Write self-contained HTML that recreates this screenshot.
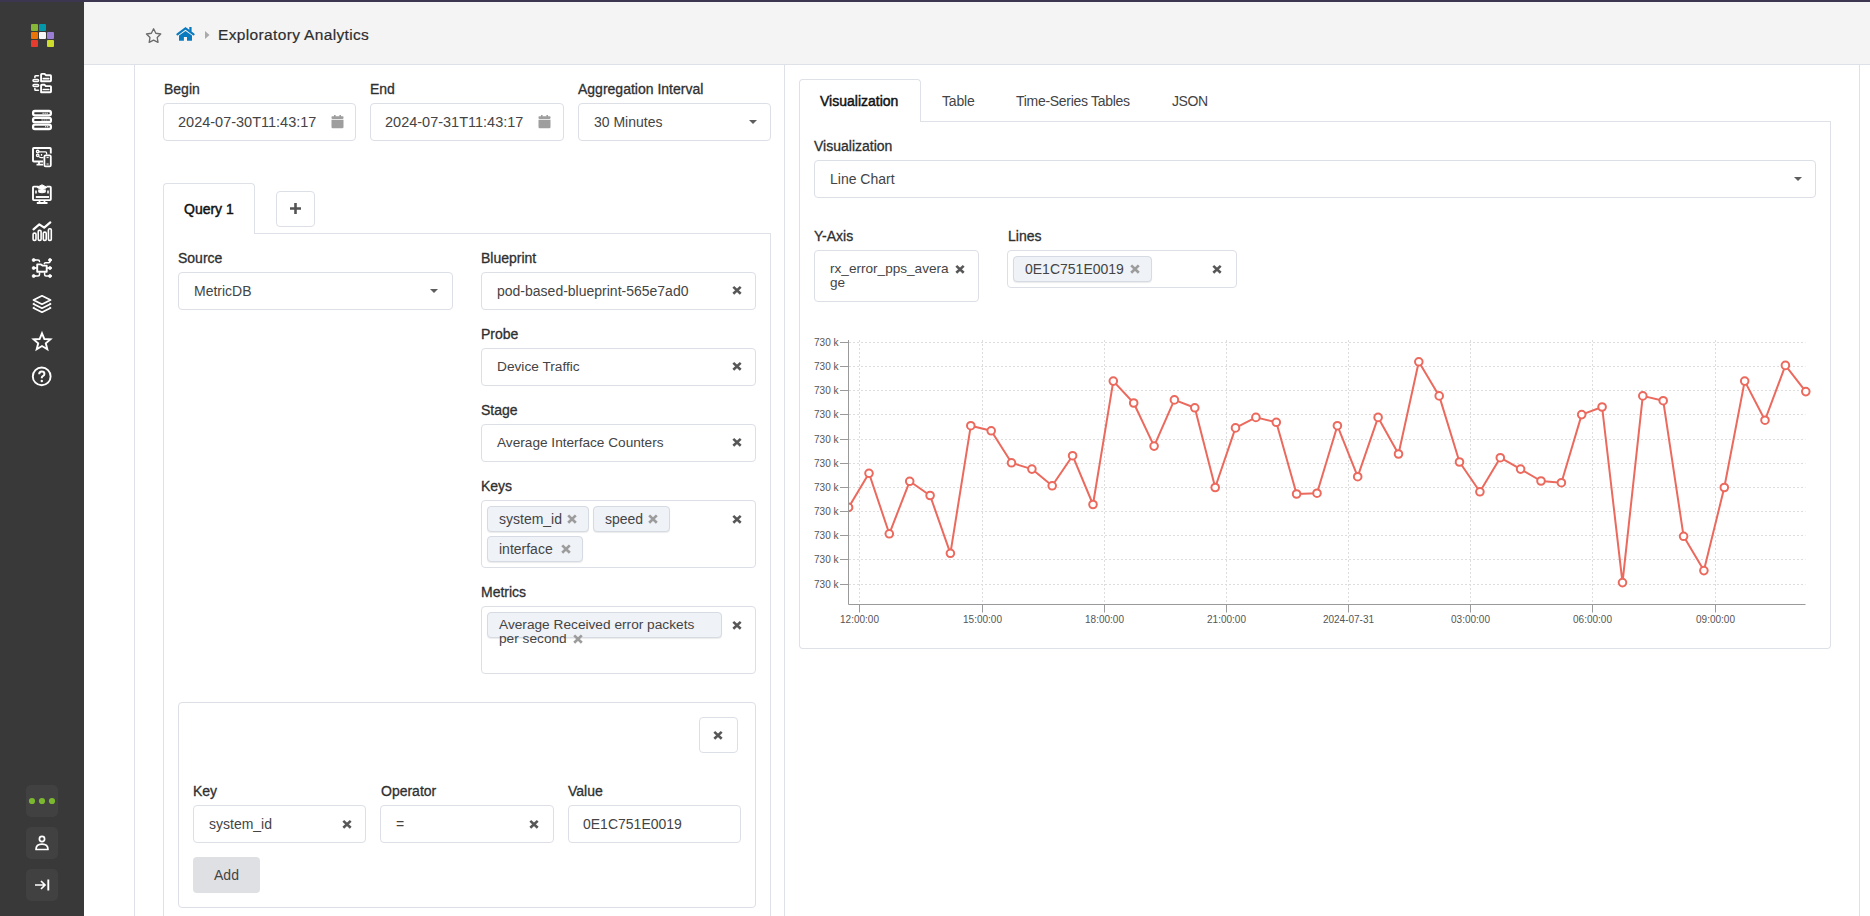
<!DOCTYPE html>
<html><head><meta charset="utf-8">
<style>
*{box-sizing:border-box}
html,body{margin:0;padding:0}
body{width:1870px;height:916px;overflow:hidden;position:relative;background:#fff;font-family:"Liberation Sans",sans-serif;color:#333}
.a{position:absolute}
.lbl{position:absolute;font-size:14px;line-height:16px;color:#2f2f2f;-webkit-text-stroke:0.3px #2f2f2f;white-space:nowrap}
.inp{position:absolute;border:1px solid #dcdfe6;border-radius:4px;background:#fff}
.val{position:absolute;font-size:14px;line-height:16px;color:#444;white-space:nowrap}
.vl{position:absolute;width:1px;background:#dee1e7}
.hl{position:absolute;height:1px;background:#dee1e7}
.caret{position:absolute;width:0;height:0;border-left:4px solid transparent;border-right:4px solid transparent;border-top:4px solid #5e5e5e}
.tag{position:absolute;background:#eff2f7;border:1px solid #d6dae2;border-radius:4px;box-shadow:0 1px 1px rgba(0,0,0,0.08)}
.sbi{position:absolute;left:32px;width:20px;height:20px}
.sbb{position:absolute;left:26px;width:32px;height:32px;border-radius:5px;background:#414141}
</style></head>
<body>
<!-- top bar -->
<div class="a" style="left:0;top:0;width:1870px;height:2px;background:#3d3650"></div>
<!-- sidebar -->
<div class="a" style="left:0;top:2px;width:84px;height:914px;background:#393939"></div>
<!-- header -->
<div class="a" style="left:84px;top:2px;width:1786px;height:62px;background:#f4f4f4"></div>
<div class="hl" style="left:84px;top:64px;width:1786px"></div>
<!-- main vertical lines -->
<div class="vl" style="left:134px;top:65px;height:851px"></div>
<div class="vl" style="left:784px;top:65px;height:851px"></div>
<div class="vl" style="left:1859px;top:65px;height:851px"></div>

<!-- SIDEBAR_ICONS -->
<svg class="a" style="left:31px;top:24px" width="23" height="23" viewBox="0 0 23 23">
<rect x="0" y="0" width="7" height="7" rx="1" fill="#86b737"/><rect x="8" y="0" width="7" height="7" rx="1" fill="#0397aa"/>
<rect x="0" y="8" width="7" height="7" rx="1" fill="#ea7409"/><rect x="8" y="8" width="7" height="7" rx="1" fill="#f6f6f6"/><rect x="16" y="8" width="7" height="7" rx="1" fill="#9a7ed6"/>
<rect x="0" y="16" width="7" height="7" rx="1" fill="#e63c2f"/><rect x="16" y="16" width="7" height="7" rx="1" fill="#cedd2b"/>
</svg>
<svg class="a" style="left:28px;top:69px" width="28" height="28" viewBox="0 0 28 28" fill="none" stroke="#fff" stroke-linecap="round" stroke-linejoin="round">
<path d="M13.1 12.3 V5.6 Q13.1 4.9 13.8 4.9 H16.6 L17.8 6.2 H22.3 Q23 6.2 23 6.9 V11.6 Q23 12.3 22.3 12.3 Z" stroke-width="1.9"/>
<path d="M15.3 9.6 H20.8" stroke-width="1.7"/>
<path d="M13.1 23.2 V16.5 Q13.1 15.8 13.8 15.8 H16.6 L17.8 17.1 H22.3 Q23 17.1 23 17.8 V22.5 Q23 23.2 22.3 23.2 Z" stroke-width="1.9"/>
<path d="M15.3 20.5 H20.8" stroke-width="1.7"/>
<rect x="5" y="10.5" width="5.6" height="2" rx="1" stroke-width="1.5"/>
<rect x="5" y="15.5" width="5.6" height="2" rx="1" stroke-width="1.5"/>
<path d="M10.4 6.8 H7.6 Q6.9 6.8 6.9 7.5 V8.4" stroke-width="1.6"/>
<path d="M6.9 19.6 V20.5 Q6.9 21.2 7.6 21.2 H10.4" stroke-width="1.6"/>
</svg>
<svg class="a" style="left:28px;top:106px" width="28" height="28" viewBox="0 0 28 28" fill="none" stroke="#fff">
<rect x="5.1" y="5" width="17.8" height="4.4" rx="1.8" stroke-width="2.3"/>
<rect x="5.1" y="11.8" width="17.8" height="4.4" rx="1.8" stroke-width="2.3"/>
<rect x="5.1" y="18.6" width="17.8" height="4.4" rx="1.8" stroke-width="2.3"/>
<path d="M14.5 7.2 H20.5 M13.5 14 H20.5 M17 20.8 H20.5" stroke-width="1.1" stroke-dasharray="1.3 0.7"/>
</svg>
<svg class="a" style="left:28px;top:143px" width="28" height="28" viewBox="0 0 28 28" fill="none" stroke="#fff" stroke-linejoin="round">
<path d="M15 18.5 H5.8 Q5 18.5 5 17.7 V5.8 Q5 5 5.8 5 H22 Q22.8 5 22.8 5.8 V10.5" stroke-width="1.9"/>
<path d="M11 18.8 V21.2 M8.5 21.6 H15" stroke-width="1.8"/>
<rect x="16.4" y="12.3" width="6.4" height="11.1" rx="1.2" stroke-width="1.8"/>
<path d="M18.5 14.6 H20.7 M18.5 21 H20.7" stroke-width="1"/>
<circle cx="9.7" cy="8.5" r="1.2" stroke-width="1.4"/><circle cx="9.7" cy="12.3" r="1.2" stroke-width="1.4"/>
<path d="M11 8.8 H17.5 Q18.6 8.8 18.6 10 V11.5 M10.8 13.5 Q11.5 14.6 13 14.6 H15.5 M13.5 11 V12.8" stroke-width="1.3"/>
</svg>
<svg class="a" style="left:28px;top:180px" width="28" height="28" viewBox="0 0 28 28" fill="none" stroke="#fff" stroke-linejoin="round">
<path d="M10.5 6.6 H5.8 Q5 6.6 5 7.4 V19.3 Q5 20.1 5.8 20.1 H22 Q22.8 20.1 22.8 19.3 V7.4 Q22.8 6.6 22 6.6 H18.5" stroke-width="1.9"/>
<path d="M7.8 17 H21" stroke-width="1.9"/>
<path d="M11.5 20.5 V22.8 M8.8 23 H19.5 M16.5 20.5 V22.8" stroke-width="1.8"/>
<path d="M8 13.5 V10.5 M20 13.5 V10.5" stroke-width="1.6"/>
<path d="M14 4.8 L19 7.4 L14 9.9 L9 7.4 Z" fill="#fff" stroke-width="1"/>
<path d="M10.8 9.4 V12 Q14 13.5 17.2 12 V9.4" fill="#fff" stroke-width="1.2"/>
</svg>
<svg class="a" style="left:28px;top:217px" width="28" height="28" viewBox="0 0 28 28" fill="none" stroke="#fff" stroke-linecap="round" stroke-linejoin="round">
<path d="M5.5 12.3 L11.3 7.4 L16.2 10.6 L22.3 5.4" stroke-width="2.2"/>
<rect x="5.1" y="16.1" width="2.9" height="7.3" rx="1.2" stroke-width="1.6"/>
<rect x="10.2" y="13.4" width="2.9" height="10" rx="1.2" stroke-width="1.6"/>
<rect x="15.3" y="15.1" width="2.9" height="8.3" rx="1.2" stroke-width="1.6"/>
<rect x="20.4" y="11.7" width="2.9" height="11.7" rx="1.2" stroke-width="1.6"/>
</svg>
<svg class="a" style="left:28px;top:254px" width="28" height="28" viewBox="0 0 28 28" fill="none" stroke="#fff" stroke-linecap="round" stroke-linejoin="round">
<path d="M9.2 17.8 V10.4 H13 L14.5 11.6 H18.7 V17.8 Z" stroke-width="1.9"/>
<circle cx="5.7" cy="6" r="1.5" fill="#fff" stroke-width="0.8"/><circle cx="22" cy="6" r="1.5" fill="#fff" stroke-width="0.8"/>
<circle cx="5.7" cy="14" r="1.5" fill="#fff" stroke-width="0.8"/><circle cx="22" cy="14" r="1.5" fill="#fff" stroke-width="0.8"/>
<circle cx="5.7" cy="22" r="1.5" fill="#fff" stroke-width="0.8"/><circle cx="22" cy="22" r="1.5" fill="#fff" stroke-width="0.8"/>
<path d="M5.7 6 H10 Q11.5 6 11.5 7.5 M22 6 V7.5 Q22 8.8 20.7 8.8 H17.5 Q16.3 8.8 16.3 9.8 M5.7 14 H9 M18.8 14 H22 M5.7 22 H10 Q11.5 22 11.5 20.5 V19 M22 22 H18 Q16.6 22 16.6 20.5 V19" stroke-width="1.5"/>
</svg>
<svg class="a" style="left:28px;top:291px" width="28" height="28" viewBox="0 0 28 28" fill="none" stroke="#fff" stroke-linejoin="round">
<path d="M14 4.8 L22.5 9 L14 13.2 L5.5 9 Z" stroke-width="1.8"/>
<path d="M6.6 12.4 L5.5 13 L14 17.2 L22.5 13 L21.4 12.4" stroke-width="1.8"/>
<path d="M6.6 16.4 L5.5 17 L14 21.2 L22.5 17 L21.4 16.4" stroke-width="1.8"/>
</svg>
<svg class="a" style="left:28px;top:328px" width="28" height="28" viewBox="0 0 28 28" fill="none" stroke="#fff" stroke-linejoin="miter">
<path d="M14 5.3 L16.4 11 L22.4 11.4 L17.8 15.3 L19.3 21.2 L14 18 L8.7 21.2 L10.2 15.3 L5.6 11.4 L11.6 11 Z" stroke-width="1.9"/>
</svg>
<svg class="a" style="left:28px;top:363px" width="28" height="28" viewBox="0 0 28 28" fill="none" stroke="#fff">
<circle cx="13.7" cy="13.4" r="8.9" stroke-width="1.9"/>
<path d="M11.2 11.3 Q11.2 8.6 13.8 8.6 Q16.4 8.6 16.4 10.9 Q16.4 12.3 14.8 13.1 Q13.8 13.6 13.8 14.8 V15.3" stroke-width="2" fill="none"/>
<circle cx="13.8" cy="18" r="1.2" fill="#fff" stroke="none"/>
</svg>
<div class="sbb" style="top:785px"></div>
<svg class="a" style="left:26px;top:785px" width="32" height="32" viewBox="0 0 32 32"><circle cx="6" cy="16" r="3.1" fill="#7cb82f"/><circle cx="16" cy="16" r="3.1" fill="#7cb82f"/><circle cx="26" cy="16" r="3.1" fill="#7cb82f"/></svg>
<div class="sbb" style="top:827px"></div>
<svg class="a" style="left:26px;top:827px" width="32" height="32" viewBox="0 0 32 32" fill="none" stroke="#fff" stroke-width="1.7"><circle cx="16" cy="12" r="2.6"/><path d="M10 22.5 Q10 17.2 16 17.2 Q22 17.2 22 22.5 Z" stroke-linejoin="round"/></svg>
<div class="sbb" style="top:869px"></div>
<svg class="a" style="left:26px;top:869px" width="32" height="32" viewBox="0 0 32 32" fill="none" stroke="#fff" stroke-width="1.7"><path d="M9 16 H19 M15 12 L19 16 L15 20"/><path d="M22.3 10.5 V21.5" stroke-width="1.9"/></svg>

<!-- HEADER_CONTENT -->
<svg class="a" style="left:144px;top:26px" width="18" height="18" viewBox="0 0 18 18"><path d="M9.60 2.80 L11.83 7.23 L16.73 7.98 L13.21 11.47 L14.01 16.37 L9.60 14.10 L5.19 16.37 L5.99 11.47 L2.47 7.98 L7.37 7.23 Z" fill="none" stroke="#6b6b6b" stroke-width="1.35" stroke-linejoin="round"/></svg>
<svg class="a" style="left:172px;top:22px" width="28" height="24" viewBox="0 0 28 24"><path d="M5.4 12.4 L13.5 6.4 L21.6 12.4" fill="none" stroke="#0a7abf" stroke-width="2.1" stroke-linecap="round" stroke-linejoin="miter"/><rect x="17.3" y="5" width="2.3" height="4.6" fill="#0a7abf"/><path d="M7 13.6 L13.5 8.9 L20 13.6 V18.2 Q20 18.8 19.4 18.8 H15 V15 H11.9 V18.8 H7.6 Q7 18.8 7 18.2 Z" fill="#0a7abf"/></svg>
<svg class="a" style="left:204px;top:30px" width="8" height="10" viewBox="0 0 8 10"><path d="M1 1 L5.5 5 L1 9 Z" fill="#aaaaaa"/></svg>
<div class="a" style="left:218px;top:27px;font-size:15.5px;line-height:16px;color:#2e2e2e;white-space:nowrap;letter-spacing:0.35px;-webkit-text-stroke:0.2px #2e2e2e">Exploratory Analytics</div>

<!-- LEFT_PANEL -->
<div class="lbl" style="left:164px;top:81px">Begin</div>
<div class="lbl" style="left:370px;top:81px">End</div>
<div class="lbl" style="left:578px;top:81px">Aggregation Interval</div>
<div class="inp" style="left:163px;top:103px;width:193px;height:38px"></div>
<div class="val" style="left:178px;top:114px;font-size:14.5px">2024-07-30T11:43:17</div>
<svg class="a" style="left:331px;top:114px" width="13" height="15" viewBox="0 0 13 15"><path d="M3 1 h1.6 v2 h-1.6z M8.4 1 h1.6 v2 h-1.6z" fill="#9e9e9e"/><rect x="0.5" y="2.3" width="12" height="2.6" rx="0.8" fill="#9e9e9e"/><path d="M0.5 5.8 H12.5 V13 Q12.5 14.2 11.3 14.2 H1.7 Q0.5 14.2 0.5 13 Z" fill="#9e9e9e"/></svg>
<div class="inp" style="left:370px;top:103px;width:194px;height:38px"></div>
<div class="val" style="left:385px;top:114px;font-size:14.5px">2024-07-31T11:43:17</div>
<svg class="a" style="left:538px;top:114px" width="13" height="15" viewBox="0 0 13 15"><path d="M3 1 h1.6 v2 h-1.6z M8.4 1 h1.6 v2 h-1.6z" fill="#9e9e9e"/><rect x="0.5" y="2.3" width="12" height="2.6" rx="0.8" fill="#9e9e9e"/><path d="M0.5 5.8 H12.5 V13 Q12.5 14.2 11.3 14.2 H1.7 Q0.5 14.2 0.5 13 Z" fill="#9e9e9e"/></svg>
<div class="inp" style="left:578px;top:103px;width:193px;height:38px"></div>
<div class="val" style="left:594px;top:114px">30 Minutes</div>
<div class="caret" style="left:749px;top:120px"></div>

<!-- query tabs -->
<div class="a" style="left:163px;top:183px;width:92px;height:51px;border:1px solid #dee1e7;border-bottom:none;border-radius:4px 4px 0 0;background:#fff"></div>
<div class="a" style="left:184px;top:201px;font-size:14px;line-height:16px;color:#111;white-space:nowrap;-webkit-text-stroke:0.45px #111">Query 1</div>
<div class="inp" style="left:276px;top:191px;width:39px;height:36px"></div>
<svg class="a" style="left:289px;top:202px" width="13" height="13" viewBox="0 0 13 13"><path d="M6.5 1 V12 M1 6.5 H12" stroke="#555" stroke-width="2.6"/></svg>
<div class="hl" style="left:255px;top:233px;width:516px"></div>
<div class="vl" style="left:163px;top:234px;height:682px"></div>
<div class="vl" style="left:770px;top:233px;height:683px"></div>

<div class="lbl" style="left:178px;top:250px">Source</div>
<div class="inp" style="left:178px;top:272px;width:275px;height:38px"></div>
<div class="val" style="left:194px;top:283px">MetricDB</div>
<div class="caret" style="left:430px;top:289px"></div>

<div class="lbl" style="left:481px;top:250px">Blueprint</div>
<div class="inp" style="left:481px;top:272px;width:275px;height:38px"></div>
<div class="val" style="left:497px;top:283px">pod-based-blueprint-565e7ad0</div>
<svg class="a xx" style="left:732px;top:285px" width="10" height="10" viewBox="0 0 10 10"><path d="M1.3 1.9 L8.7 8.8 M8.7 1.9 L1.3 8.8" stroke="#575757" stroke-width="2.6"/></svg>

<div class="lbl" style="left:481px;top:326px">Probe</div>
<div class="inp" style="left:481px;top:348px;width:275px;height:38px"></div>
<div class="val" style="left:497px;top:359px;font-size:13.7px">Device Traffic</div>
<svg class="a" style="left:732px;top:361px" width="10" height="10" viewBox="0 0 10 10"><path d="M1.3 1.9 L8.7 8.8 M8.7 1.9 L1.3 8.8" stroke="#575757" stroke-width="2.6"/></svg>

<div class="lbl" style="left:481px;top:402px">Stage</div>
<div class="inp" style="left:481px;top:424px;width:275px;height:38px"></div>
<div class="val" style="left:497px;top:435px;font-size:13.65px">Average Interface Counters</div>
<svg class="a" style="left:732px;top:437px" width="10" height="10" viewBox="0 0 10 10"><path d="M1.3 1.9 L8.7 8.8 M8.7 1.9 L1.3 8.8" stroke="#575757" stroke-width="2.6"/></svg>

<div class="lbl" style="left:481px;top:478px">Keys</div>
<div class="inp" style="left:481px;top:500px;width:275px;height:68px"></div>
<div class="tag" style="left:487px;top:506px;width:102px;height:26px"></div>
<div class="val" style="left:499px;top:511px">system_id</div>
<svg class="a" style="left:567px;top:514px" width="10" height="10" viewBox="0 0 10 10"><path d="M1.2 1.4 L8.8 8.8 M8.8 1.4 L1.2 8.8" stroke="#9c9c9c" stroke-width="2.7"/></svg>
<div class="tag" style="left:593px;top:506px;width:77px;height:26px"></div>
<div class="val" style="left:605px;top:511px">speed</div>
<svg class="a" style="left:648px;top:514px" width="10" height="10" viewBox="0 0 10 10"><path d="M1.2 1.4 L8.8 8.8 M8.8 1.4 L1.2 8.8" stroke="#9c9c9c" stroke-width="2.7"/></svg>
<div class="tag" style="left:487px;top:536px;width:96px;height:26px"></div>
<div class="val" style="left:499px;top:541px">interface</div>
<svg class="a" style="left:561px;top:544px" width="10" height="10" viewBox="0 0 10 10"><path d="M1.2 1.4 L8.8 8.8 M8.8 1.4 L1.2 8.8" stroke="#9c9c9c" stroke-width="2.7"/></svg>
<svg class="a" style="left:732px;top:514px" width="10" height="10" viewBox="0 0 10 10"><path d="M1.3 1.9 L8.7 8.8 M8.7 1.9 L1.3 8.8" stroke="#575757" stroke-width="2.6"/></svg>

<div class="lbl" style="left:481px;top:584px">Metrics</div>
<div class="inp" style="left:481px;top:606px;width:275px;height:68px"></div>
<div class="tag" style="left:487px;top:612px;width:235px;height:26px"></div>
<div class="val" style="left:499px;top:618px;font-size:13.7px;line-height:14px">Average Received error packets<br>per second</div>
<svg class="a" style="left:573px;top:634px" width="10" height="10" viewBox="0 0 10 10"><path d="M1.2 1.4 L8.8 8.8 M8.8 1.4 L1.2 8.8" stroke="#9c9c9c" stroke-width="2.7"/></svg>
<svg class="a" style="left:732px;top:620px" width="10" height="10" viewBox="0 0 10 10"><path d="M1.3 1.9 L8.7 8.8 M8.7 1.9 L1.3 8.8" stroke="#575757" stroke-width="2.6"/></svg>

<!-- filter -->
<div class="inp" style="left:178px;top:702px;width:578px;height:206px"></div>
<div class="inp" style="left:699px;top:717px;width:39px;height:36px"></div>
<svg class="a" style="left:713px;top:730px" width="10" height="10" viewBox="0 0 10 10"><path d="M1.3 1.9 L8.7 8.8 M8.7 1.9 L1.3 8.8" stroke="#575757" stroke-width="2.6"/></svg>
<div class="lbl" style="left:193px;top:783px">Key</div>
<div class="lbl" style="left:381px;top:783px">Operator</div>
<div class="lbl" style="left:568px;top:783px">Value</div>
<div class="inp" style="left:193px;top:805px;width:173px;height:38px"></div>
<div class="val" style="left:209px;top:816px">system_id</div>
<svg class="a" style="left:342px;top:819px" width="10" height="10" viewBox="0 0 10 10"><path d="M1.3 1.9 L8.7 8.8 M8.7 1.9 L1.3 8.8" stroke="#575757" stroke-width="2.6"/></svg>
<div class="inp" style="left:380px;top:805px;width:174px;height:38px"></div>
<div class="val" style="left:396px;top:816px">=</div>
<svg class="a" style="left:529px;top:819px" width="10" height="10" viewBox="0 0 10 10"><path d="M1.3 1.9 L8.7 8.8 M8.7 1.9 L1.3 8.8" stroke="#575757" stroke-width="2.6"/></svg>
<div class="inp" style="left:568px;top:805px;width:173px;height:38px"></div>
<div class="val" style="left:583px;top:816px">0E1C751E0019</div>
<div class="a" style="left:193px;top:857px;width:67px;height:36px;border-radius:4px;background:#dfe0e3"></div>
<div class="a" style="left:193px;top:867px;width:67px;text-align:center;font-size:14px;line-height:16px;color:#444">Add</div>

<!-- RIGHT_PANEL -->
<div class="a" style="left:799px;top:79px;width:122px;height:43px;border:1px solid #dee1e7;border-bottom:none;border-radius:4px 4px 0 0;background:#fff"></div>
<div class="a" style="left:820px;top:93px;font-size:14px;line-height:16px;color:#111;white-space:nowrap;-webkit-text-stroke:0.45px #111">Visualization</div>
<div class="val" style="left:942px;top:93px;letter-spacing:-0.2px">Table</div>
<div class="val" style="left:1016px;top:93px;letter-spacing:-0.3px">Time-Series Tables</div>
<div class="val" style="left:1172px;top:93px;letter-spacing:-0.4px">JSON</div>
<div class="hl" style="left:921px;top:121px;width:910px"></div>
<div class="a" style="left:799px;top:121px;width:1032px;height:528px;border:1px solid #dee1e7;border-top:none;border-radius:0 0 4px 4px"></div>

<div class="lbl" style="left:814px;top:138px">Visualization</div>
<div class="inp" style="left:814px;top:160px;width:1002px;height:38px"></div>
<div class="val" style="left:830px;top:171px">Line Chart</div>
<div class="caret" style="left:1794px;top:177px"></div>

<div class="lbl" style="left:814px;top:228px">Y-Axis</div>
<div class="inp" style="left:814px;top:250px;width:165px;height:52px"></div>
<div class="val" style="left:830px;top:262px;font-size:13.6px;line-height:14px">rx_error_pps_avera<br>ge</div>
<svg class="a" style="left:955px;top:264px" width="10" height="10" viewBox="0 0 10 10"><path d="M1.3 1.9 L8.7 8.8 M8.7 1.9 L1.3 8.8" stroke="#575757" stroke-width="2.6"/></svg>

<div class="lbl" style="left:1008px;top:228px">Lines</div>
<div class="inp" style="left:1007px;top:250px;width:230px;height:38px"></div>
<div class="tag" style="left:1013px;top:256px;width:139px;height:26px"></div>
<div class="val" style="left:1025px;top:261px">0E1C751E0019</div>
<svg class="a" style="left:1130px;top:264px" width="10" height="10" viewBox="0 0 10 10"><path d="M1.2 1.4 L8.8 8.8 M8.8 1.4 L1.2 8.8" stroke="#9c9c9c" stroke-width="2.7"/></svg>
<svg class="a" style="left:1212px;top:264px" width="10" height="10" viewBox="0 0 10 10"><path d="M1.3 1.9 L8.7 8.8 M8.7 1.9 L1.3 8.8" stroke="#575757" stroke-width="2.6"/></svg>

<!-- CHART -->
<svg class="a" style="left:800px;top:330px" width="1030" height="310" viewBox="800 330 1030 310">
<path d="M849 342.5 H1805.5 M849 366.5 H1805.5 M849 390.5 H1805.5 M849 414.5 H1805.5 M849 439.5 H1805.5 M849 463.5 H1805.5 M849 487.5 H1805.5 M849 511.5 H1805.5 M849 535.5 H1805.5 M849 559.5 H1805.5 M849 584.5 H1805.5 M859.5 340 V604 M982.5 340 V604 M1104.5 340 V604 M1226.5 340 V604 M1348.5 340 V604 M1470.5 340 V604 M1592.5 340 V604 M1715.5 340 V604" stroke="#dddddd" stroke-width="1" stroke-dasharray="2 2" fill="none"/>
<path d="M848.5 340 V604.5 H1805.5 M840 342.5 H848.5 M840 366.5 H848.5 M840 390.5 H848.5 M840 414.5 H848.5 M840 439.5 H848.5 M840 463.5 H848.5 M840 487.5 H848.5 M840 511.5 H848.5 M840 535.5 H848.5 M840 559.5 H848.5 M840 584.5 H848.5 M859.5 604.5 V612.5 M982.5 604.5 V612.5 M1104.5 604.5 V612.5 M1226.5 604.5 V612.5 M1348.5 604.5 V612.5 M1470.5 604.5 V612.5 M1592.5 604.5 V612.5 M1715.5 604.5 V612.5" stroke="#9a9a9a" stroke-width="1" fill="none"/>
<g font-family="Liberation Sans" font-size="10" fill="#555"><text x="838.5" y="346.1" text-anchor="end">730 k</text><text x="838.5" y="370.1" text-anchor="end">730 k</text><text x="838.5" y="394.1" text-anchor="end">730 k</text><text x="838.5" y="418.1" text-anchor="end">730 k</text><text x="838.5" y="443.1" text-anchor="end">730 k</text><text x="838.5" y="467.1" text-anchor="end">730 k</text><text x="838.5" y="491.1" text-anchor="end">730 k</text><text x="838.5" y="515.1" text-anchor="end">730 k</text><text x="838.5" y="539.1" text-anchor="end">730 k</text><text x="838.5" y="563.1" text-anchor="end">730 k</text><text x="838.5" y="588.1" text-anchor="end">730 k</text><text x="859.5" y="622.7" text-anchor="middle">12:00:00</text><text x="982.5" y="622.7" text-anchor="middle">15:00:00</text><text x="1104.5" y="622.7" text-anchor="middle">18:00:00</text><text x="1226.5" y="622.7" text-anchor="middle">21:00:00</text><text x="1348.5" y="622.7" text-anchor="middle">2024-07-31</text><text x="1470.5" y="622.7" text-anchor="middle">03:00:00</text><text x="1592.5" y="622.7" text-anchor="middle">06:00:00</text><text x="1715.5" y="622.7" text-anchor="middle">09:00:00</text></g>
<defs><clipPath id="cp"><rect x="849" y="330" width="980" height="290"/></clipPath></defs><g clip-path="url(#cp)">
<polyline points="848.6,507.4 869.0,473.3 889.3,533.8 909.7,481.3 930.1,495.5 950.4,553.3 970.8,425.7 991.2,430.8 1011.5,462.8 1031.9,469.1 1052.2,485.8 1072.6,455.7 1093.0,504.5 1113.3,381.1 1133.7,403.0 1154.1,446.1 1174.4,399.9 1194.8,407.8 1215.2,487.5 1235.5,427.9 1255.9,417.4 1276.3,422.3 1296.6,494.0 1317.0,493.2 1337.4,425.7 1357.7,476.7 1378.1,417.4 1398.5,454.0 1418.8,361.8 1439.2,395.9 1459.5,462.0 1479.9,491.8 1500.3,457.7 1520.6,469.1 1541.0,481.0 1561.4,482.7 1581.7,414.6 1602.1,407.0 1622.5,582.6 1642.8,395.9 1663.2,400.7 1683.6,536.3 1703.9,570.6 1724.3,487.5 1744.7,381.1 1765.0,420.2 1785.4,365.4 1805.8,391.6" fill="none" stroke="#eb695d" stroke-width="2" stroke-linejoin="round"/>
<g fill="#fff" stroke="#eb695d" stroke-width="2"><circle cx="848.6" cy="507.4" r="3.8"/><circle cx="869.0" cy="473.3" r="3.8"/><circle cx="889.3" cy="533.8" r="3.8"/><circle cx="909.7" cy="481.3" r="3.8"/><circle cx="930.1" cy="495.5" r="3.8"/><circle cx="950.4" cy="553.3" r="3.8"/><circle cx="970.8" cy="425.7" r="3.8"/><circle cx="991.2" cy="430.8" r="3.8"/><circle cx="1011.5" cy="462.8" r="3.8"/><circle cx="1031.9" cy="469.1" r="3.8"/><circle cx="1052.2" cy="485.8" r="3.8"/><circle cx="1072.6" cy="455.7" r="3.8"/><circle cx="1093.0" cy="504.5" r="3.8"/><circle cx="1113.3" cy="381.1" r="3.8"/><circle cx="1133.7" cy="403.0" r="3.8"/><circle cx="1154.1" cy="446.1" r="3.8"/><circle cx="1174.4" cy="399.9" r="3.8"/><circle cx="1194.8" cy="407.8" r="3.8"/><circle cx="1215.2" cy="487.5" r="3.8"/><circle cx="1235.5" cy="427.9" r="3.8"/><circle cx="1255.9" cy="417.4" r="3.8"/><circle cx="1276.3" cy="422.3" r="3.8"/><circle cx="1296.6" cy="494.0" r="3.8"/><circle cx="1317.0" cy="493.2" r="3.8"/><circle cx="1337.4" cy="425.7" r="3.8"/><circle cx="1357.7" cy="476.7" r="3.8"/><circle cx="1378.1" cy="417.4" r="3.8"/><circle cx="1398.5" cy="454.0" r="3.8"/><circle cx="1418.8" cy="361.8" r="3.8"/><circle cx="1439.2" cy="395.9" r="3.8"/><circle cx="1459.5" cy="462.0" r="3.8"/><circle cx="1479.9" cy="491.8" r="3.8"/><circle cx="1500.3" cy="457.7" r="3.8"/><circle cx="1520.6" cy="469.1" r="3.8"/><circle cx="1541.0" cy="481.0" r="3.8"/><circle cx="1561.4" cy="482.7" r="3.8"/><circle cx="1581.7" cy="414.6" r="3.8"/><circle cx="1602.1" cy="407.0" r="3.8"/><circle cx="1622.5" cy="582.6" r="3.8"/><circle cx="1642.8" cy="395.9" r="3.8"/><circle cx="1663.2" cy="400.7" r="3.8"/><circle cx="1683.6" cy="536.3" r="3.8"/><circle cx="1703.9" cy="570.6" r="3.8"/><circle cx="1724.3" cy="487.5" r="3.8"/><circle cx="1744.7" cy="381.1" r="3.8"/><circle cx="1765.0" cy="420.2" r="3.8"/><circle cx="1785.4" cy="365.4" r="3.8"/><circle cx="1805.8" cy="391.6" r="3.8"/></g></g>
</svg>
<!-- /CHART -->

</body></html>
